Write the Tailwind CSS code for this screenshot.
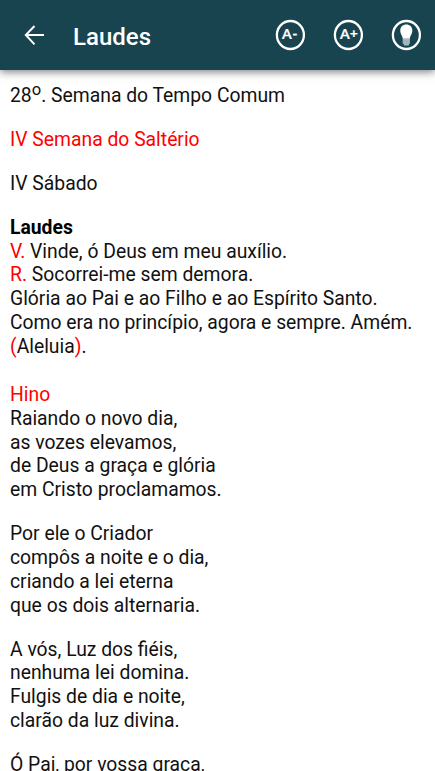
<!DOCTYPE html>
<html lang="pt">
<head>
<meta charset="utf-8">
<title>Laudes</title>
<script src="https://cdn.jsdelivr.net/npm/@tailwindcss/browser@4"></script>
</head>
<body class="h-[771px] overflow-hidden bg-white font-[Roboto,sans-serif] text-[#111]">
<header class="relative flex h-[70px] items-center bg-[#184450] pl-[22px] pr-[14px] text-white shadow-[0_2px_8px_rgba(0,0,0,0.5)]">
  <svg class="h-6 w-6" viewBox="0 0 24 24" fill="none" stroke="currentColor" stroke-width="2"><path d="M22 12H4M12.5 3L3.8 12L12.5 21.4"/></svg>
  <h1 class="ml-[27px] mt-[3px] text-[24px] font-medium leading-7">Laudes</h1>
  <div class="ml-auto flex gap-7">
    <svg class="h-[30px] w-[30px] overflow-visible" viewBox="-0.4 0 30 30"><ellipse cx="15" cy="15" rx="13.5" ry="14" fill="none" stroke="#fff" stroke-width="2.3"/><text x="6.5" y="19" font-size="14" font-weight="700" fill="#fff" stroke="#fff" stroke-width=".2" font-family="Lato">A<tspan x="16.8" dy="-.3">-</tspan></text></svg>
    <svg class="h-[30px] w-[30px] overflow-visible" viewBox="-0.4 0 30 30"><ellipse cx="15" cy="15" rx="13.5" ry="14" fill="none" stroke="#fff" stroke-width="2.3"/><text x="6.5" y="19" font-size="14" font-weight="700" fill="#fff" stroke="#fff" stroke-width=".2" font-family="Lato">A<tspan x="16.4" dy="-.8">+</tspan></text></svg>
    <svg class="h-[30px] w-[30px] overflow-visible" viewBox="-0.4 0 30 30"><ellipse cx="15" cy="15" rx="13.5" ry="14" fill="none" stroke="#fff" stroke-width="2.3"/><path d="M11.3 18.8C11.3 15.5 8.9 14.5 8.9 10.4C8.9 6.8 11.3 4.6 14.9 4.6S20.9 6.8 20.9 10.4C20.9 14.5 18.5 15.5 18.5 18.8Z" fill="#fff"/><path d="M11.3 18.8H18.5V23.5L17.5 24.3V25.6H12.5V24.3L11.3 23.5Z" fill="#a9bbc0"/><path d="M11.3 21H18.5M11.3 23H18.5" stroke="#8ca4aa" stroke-width=".5"/></svg>
  </div>
</header>
<main class="flex flex-col gap-5 whitespace-nowrap px-[10px] pt-[14.2px] text-[19.32px] leading-[23.86px]">
  <p>28<sup class="-top-[7px] text-[16.6px]">o</sup>. Semana do Tempo Comum</p>
  <p class="text-[#f00]">IV Semana do Saltério</p>
  <p>IV Sábado</p>
  <p><b class="text-black">Laudes</b><br><span class="text-[#f00]">V.</span> Vinde, ó Deus em meu auxílio.<br><span class="text-[#f00]">R.</span> Socorrei-me sem demora.<br>Glória ao Pai e ao Filho e ao Espírito Santo.<br>Como era no princípio, agora e sempre. Amém.<br><span class="text-[#f00]">(</span>Aleluia<span class="text-[#f00]">)</span>.<br><br><span class="text-[#f00]">Hino</span><br>Raiando o novo dia,<br>as vozes elevamos,<br>de Deus a graça e glória<br>em Cristo proclamamos.</p>
  <p>Por ele o Criador<br>compôs a noite e o dia,<br>criando a lei eterna<br>que os dois alternaria.</p>
  <p>A vós, Luz dos fiéis,<br>nenhuma lei domina.<br>Fulgis de dia e noite,<br>clarão da luz divina.</p>
  <p>Ó Pai, por vossa graça,</p>
</main>
</body>
</html>
